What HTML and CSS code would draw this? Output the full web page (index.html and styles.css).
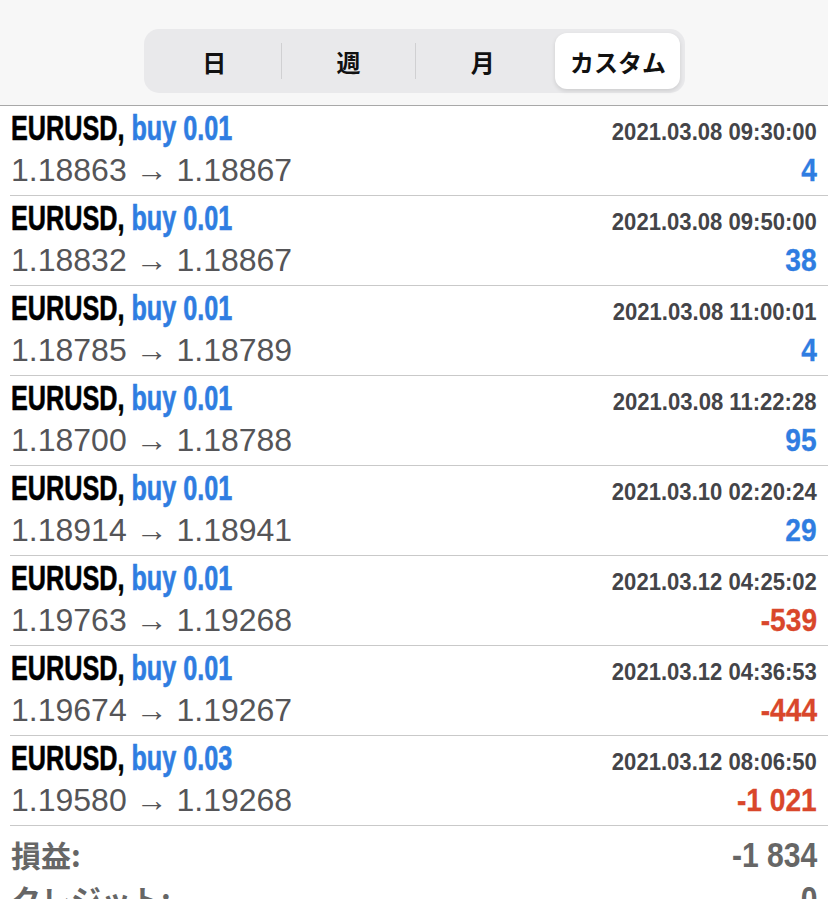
FILE: index.html
```html
<!DOCTYPE html>
<html lang="ja">
<head>
    <meta charset="UTF-8">
    <meta name="viewport" content="width=device-width, initial-scale=1.0">
    <title>履歴</title>
    <link rel="stylesheet" href="styles.css">
</head>
<body>
    <!-- 期間の切り替え -->
    <div class="toolbar">
        <div class="segmented">
            <div class="seg">日</div>
            <span class="divider"></span>
            <div class="seg">週</div>
            <span class="divider"></span>
            <div class="seg">月</div>
            <span class="divider hidden"></span>
            <div class="seg active">カスタム</div>
        </div>
    </div>

    <!-- 取引リスト -->
    <div class="trades">
        <div class="trade">
            <div class="line1"><span class="symbol">EURUSD, <span class="buy">buy 0.01</span></span><span class="time">2021.03.08 09:30:00</span></div>
            <div class="line2"><span class="prices">1.18863 → 1.18867</span><span class="profit">4</span></div>
        </div>
        <div class="trade">
            <div class="line1"><span class="symbol">EURUSD, <span class="buy">buy 0.01</span></span><span class="time">2021.03.08 09:50:00</span></div>
            <div class="line2"><span class="prices">1.18832 → 1.18867</span><span class="profit">38</span></div>
        </div>
        <div class="trade">
            <div class="line1"><span class="symbol">EURUSD, <span class="buy">buy 0.01</span></span><span class="time">2021.03.08 11:00:01</span></div>
            <div class="line2"><span class="prices">1.18785 → 1.18789</span><span class="profit">4</span></div>
        </div>
        <div class="trade">
            <div class="line1"><span class="symbol">EURUSD, <span class="buy">buy 0.01</span></span><span class="time">2021.03.08 11:22:28</span></div>
            <div class="line2"><span class="prices">1.18700 → 1.18788</span><span class="profit">95</span></div>
        </div>
        <div class="trade">
            <div class="line1"><span class="symbol">EURUSD, <span class="buy">buy 0.01</span></span><span class="time">2021.03.10 02:20:24</span></div>
            <div class="line2"><span class="prices">1.18914 → 1.18941</span><span class="profit">29</span></div>
        </div>
        <div class="trade">
            <div class="line1"><span class="symbol">EURUSD, <span class="buy">buy 0.01</span></span><span class="time">2021.03.12 04:25:02</span></div>
            <div class="line2"><span class="prices">1.19763 → 1.19268</span><span class="profit loss">-539</span></div>
        </div>
        <div class="trade">
            <div class="line1"><span class="symbol">EURUSD, <span class="buy">buy 0.01</span></span><span class="time">2021.03.12 04:36:53</span></div>
            <div class="line2"><span class="prices">1.19674 → 1.19267</span><span class="profit loss">-444</span></div>
        </div>
        <div class="trade">
            <div class="line1"><span class="symbol">EURUSD, <span class="buy">buy 0.03</span></span><span class="time">2021.03.12 08:06:50</span></div>
            <div class="line2"><span class="prices">1.19580 → 1.19268</span><span class="profit loss">-1 021</span></div>
        </div>
    </div>

    <!-- 合計 -->
    <div class="summary">
        <div class="sum-row"><span class="sum-label">損益:</span><span class="sum-value">-1 834</span></div>
        <div class="sum-row"><span class="sum-label">クレジット:</span><span class="sum-value">0</span></div>
    </div>
</body>
</html>
```

FILE: styles.css
```css
/* 全体 */
body {
    margin: 0;
    padding: 0;
    background-color: #fff;
    font-family: "Liberation Sans", Arial, "Noto Sans CJK JP", sans-serif;
    overflow: hidden;
}

/* ツールバー */
.toolbar {
    background-color: #f7f7f7;
    height: 105px;
    border-bottom: 1px solid #a8a8a8;
    display: flex;
    justify-content: center;
    align-items: flex-start;
}

.segmented {
    margin-top: 29px;
    width: 541px;
    height: 64px;
    box-sizing: border-box;
    padding: 4px;
    background-color: #e9e9eb;
    border-radius: 15px;
    display: flex;
    align-items: center;
}

.seg {
    flex: 1;
    height: 56px;
    display: flex;
    justify-content: center;
    align-items: center;
    font-family: "Noto Sans CJK JP", sans-serif;
    font-size: 24px;
    font-weight: 700;
    color: #111;
    border-radius: 12px;
}

.seg.active {
    flex: none;
    width: 125px;
    margin-left: 5px;
    background-color: #fff;
    box-shadow: 0 2px 4px rgba(0, 0, 0, 0.12);
}

.divider {
    width: 1px;
    height: 36px;
    background-color: #d0d0d2;
}

.divider.hidden {
    background-color: transparent;
}

/* 取引 */
.trade {
    margin-left: 10px;
    padding: 0 11px 0 1px;
    height: 89px;
    border-bottom: 1px solid #c9c9c9;
}

.line1, .line2 {
    display: flex;
    justify-content: space-between;
    align-items: baseline;
}

.line1 {
    height: 44px;
}

.line2 {
    height: 40px;
}

/* 細い書体の代わりに横幅を縮める */
.symbol {
    display: inline-block;
    font-weight: 700;
    font-size: 35px;
    color: #000;
    line-height: 44px;
    transform: scaleX(0.72);
    transform-origin: left center;
    -webkit-text-stroke: 0.6px currentColor;
    white-space: nowrap;
}

.buy {
    color: #2f7de1;
}

.time {
    display: inline-block;
    font-weight: 700;
    font-size: 24px;
    color: #444448;
    transform: scaleX(0.92);
    transform-origin: right center;
    white-space: nowrap;
}

.prices {
    font-size: 32px;
    color: #555558;
    line-height: 40px;
}

.profit {
    display: inline-block;
    font-weight: 700;
    font-size: 32px;
    color: #2f7de1;
    transform: scaleX(0.88);
    transform-origin: right center;
    -webkit-text-stroke: 0.3px currentColor;
    white-space: nowrap;
}

.profit.loss {
    color: #d9472b;
}

/* 合計 */
.summary {
    padding: 6px 11px 0 11px;
}

.sum-row {
    display: flex;
    justify-content: space-between;
    align-items: baseline;
    height: 44px;
    color: #666;
}

.sum-label {
    font-family: "Noto Sans CJK JP", sans-serif;
    font-weight: 700;
    font-size: 30px;
}

.sum-value {
    display: inline-block;
    font-weight: 700;
    font-size: 35px;
    transform: scaleX(0.86);
    transform-origin: right center;
    white-space: nowrap;
}
```
